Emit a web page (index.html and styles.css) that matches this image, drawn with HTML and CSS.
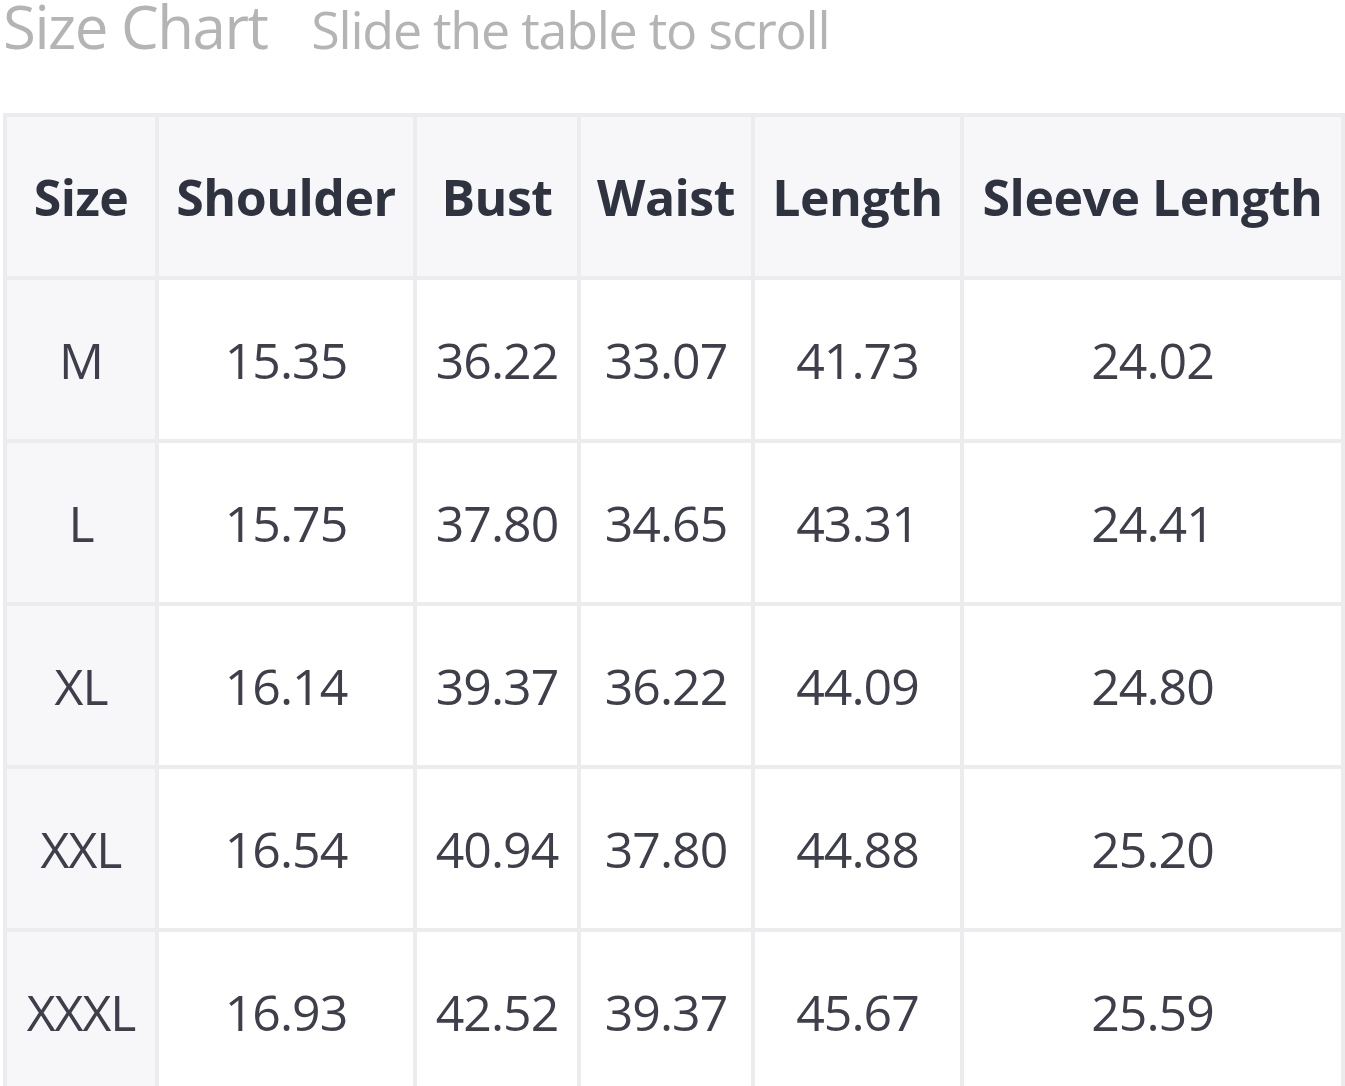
FILE: index.html
```html
<!DOCTYPE html>
<html lang="en">
<head>
<meta charset="utf-8">
<title>Size Chart</title>
<link rel="stylesheet" href="styles.css">
</head>
<body>
<div class="page">
  <div class="heading">
    <span class="title">Size Chart</span>
    <span class="hint">Slide the table to scroll</span>
  </div>
  <table class="chart">
    <colgroup>
      <col class="c1"><col class="c2"><col class="c3"><col class="c4"><col class="c5"><col class="c6">
    </colgroup>
    <thead>
      <tr><th>Size</th><th>Shoulder</th><th>Bust</th><th>Waist</th><th>Length</th><th>Sleeve Length</th></tr>
    </thead>
    <tbody>
      <tr><td class="size">M</td><td>15.35</td><td>36.22</td><td>33.07</td><td>41.73</td><td>24.02</td></tr>
      <tr><td class="size">L</td><td>15.75</td><td>37.80</td><td>34.65</td><td>43.31</td><td>24.41</td></tr>
      <tr><td class="size">XL</td><td>16.14</td><td>39.37</td><td>36.22</td><td>44.09</td><td>24.80</td></tr>
      <tr><td class="size">XXL</td><td>16.54</td><td>40.94</td><td>37.80</td><td>44.88</td><td>25.20</td></tr>
      <tr><td class="size">XXXL</td><td>16.93</td><td>42.52</td><td>39.37</td><td>45.67</td><td>25.59</td></tr>
    </tbody>
  </table>
</div>
</body>
</html>
```

FILE: styles.css
```css
html, body {
  margin: 0;
  padding: 0;
  background: #ffffff;
  overflow: hidden;
}
.page {
  padding: 0 0 0 3px;
  font-family: "Open Sans", "Noto Sans", sans-serif;
}
.heading {
  display: flex;
  align-items: baseline;
  gap: 44px;
  height: 60px;
  color: #b4b4b4;
}
.title {
  font-size: 60px;
  line-height: 52px;
  letter-spacing: -1.5px;
}
.hint {
  font-size: 52px;
  line-height: 50px;
  letter-spacing: -1.25px;
}
.chart {
  margin-top: 53px;
  border-collapse: collapse;
  width: 1338px;
  table-layout: fixed;
}
.c1 { width: 152px; }
.c2 { width: 258px; }
.c3 { width: 164px; }
.c4 { width: 174px; }
.c5 { width: 209px; }
.c6 { width: 381px; }
.chart th, .chart td {
  border: 4px solid #ececee;
  height: 159px;
  padding: 0;
  text-align: center;
  vertical-align: middle;
}
.chart th {
  background: #f7f7f9;
  color: #2f3340;
  font-weight: 700;
  font-size: 50px;
  letter-spacing: -0.5px;
}
.chart td {
  color: #3e3f4a;
  font-size: 50px;
  letter-spacing: -1px;
}
.chart td.size {
  background: #f7f7f9;
}
```
